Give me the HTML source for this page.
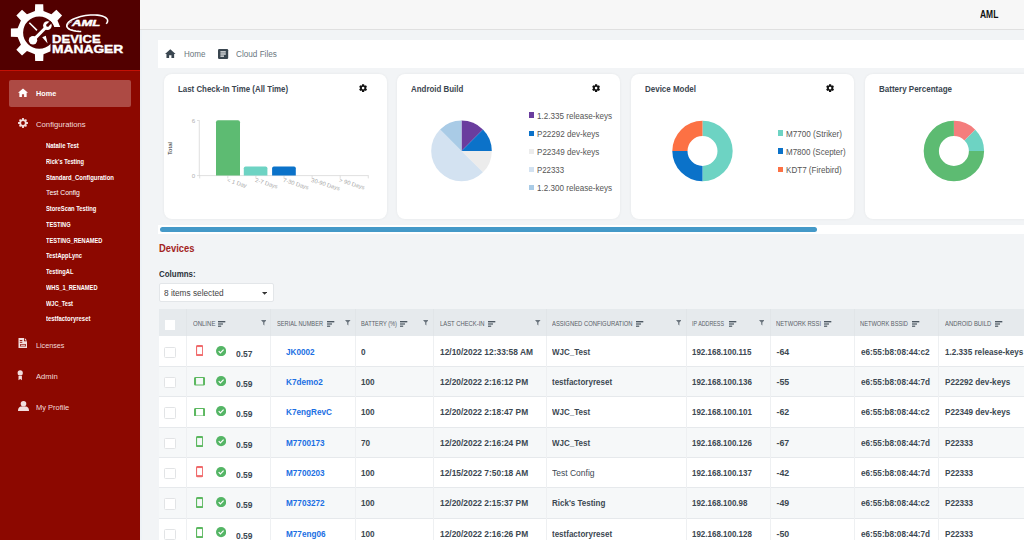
<!DOCTYPE html><html><head><meta charset="utf-8"><style>
html,body{margin:0;padding:0}
body{width:1024px;height:540px;overflow:hidden;position:relative;background:#f2f4f6;font-family:"Liberation Sans",sans-serif}
.t{position:absolute;white-space:nowrap;line-height:1;transform-origin:0 0}
.r{position:absolute}
</style></head><body>
<div class="r" style="left:0px;top:0px;width:140px;height:540px;background:#8c0800;"></div>
<div class="r" style="left:0px;top:0px;width:140px;height:69.5px;background:#520000;"></div>
<div class="r" style="left:0px;top:69.5px;width:140px;height:1.6px;background:#c41005;"></div>
<div class="r" style="left:140px;top:30px;width:1.5px;height:510px;background:#eef2f6;"></div>
<svg class="r" style="left:0px;top:0px;" width="140" height="70" viewBox="0 0 140 70"><path fill="#fff" fill-rule="evenodd" d="M34.91,11.02 L35.17,4.29 L43.23,4.29 L43.49,11.02 L51.42,14.31 L56.37,9.73 L62.07,15.43 L57.49,20.38 L60.78,28.31 L67.51,28.57 L67.51,36.63 L60.78,36.89 L57.49,44.82 L62.07,49.77 L56.37,55.47 L51.42,50.89 L43.49,54.18 L43.23,60.91 L35.17,60.91 L34.91,54.18 L26.98,50.89 L22.03,55.47 L16.33,49.77 L20.91,44.82 L17.62,36.89 L10.89,36.63 L10.89,28.57 L17.62,28.31 L20.91,20.38 L16.33,15.43 L22.03,9.73 L26.98,14.31ZM55.30,32.60 A16.1,16.1 0 1,0 23.10,32.60 A16.1,16.1 0 1,0 55.30,32.60Z"/><path fill="#520000" d="M50.5 27 L140 27 L140 69 L50.5 69Z"/><line x1="33" y1="40.3" x2="46.8" y2="26.5" stroke="#fff" stroke-width="3.1"/><circle cx="33" cy="40.3" r="4.2" fill="#fff"/><circle cx="47.4" cy="25.6" r="4.3" fill="#fff"/><path d="M48.4 26.6 L46.4 24.6 L50.2 20.8 L52.2 22.8Z" fill="#520000"/><circle cx="47.6" cy="25.4" r="1.35" fill="#520000"/><line x1="29.3" y1="22.7" x2="37" y2="30.4" stroke="#fff" stroke-width="1.5"/><path d="M42.2 37.2 L45.8 35.8 L47.6 43.4Z" fill="#fff"/><path d="M81.24,31.44 L78.95,31.39 L76.77,31.22 L74.74,30.93 L72.89,30.53 L71.25,30.03 L69.84,29.43 L68.67,28.74 L67.78,27.97 L67.16,27.13 L66.83,26.23 L66.79,25.30 L67.05,24.33 L67.60,23.34 L68.42,22.36 L69.52,21.38 L70.88,20.43 L72.46,19.52 L74.26,18.67 L76.25,17.88 L78.39,17.16 L80.66,16.53 L83.02,16.00 L85.45,15.57 L87.90,15.26 L90.34,15.05 L92.73,14.96 L95.04,15.00 L97.25,15.15 L99.30,15.41 L101.19,15.79 L102.87,16.27 L104.32,16.86 L105.53,17.53 L106.48,18.29 L107.15,19.11 L107.53,20.00 L107.62,20.93 L107.42,21.90 L106.93,22.88 L106.15,23.87" fill="none" stroke="#fff" stroke-width="1.6"/><path d="M75.99,30.58 L75.29,30.51 L74.61,30.44 L73.96,30.35 L73.33,30.25 L72.72,30.14 L72.14,30.01 L71.58,29.88 L71.06,29.73 L70.56,29.58 L70.09,29.41 L69.66,29.23 L69.25,29.04 L68.88,28.84 L68.54,28.64 L68.24,28.42 L67.97,28.20 L67.73,27.96 L67.53,27.73 L67.37,27.48 L67.24,27.22 L67.14,26.97 L67.09,26.70 L67.07,26.43 L67.09,26.15 L67.14,25.88 L67.23,25.59 L67.36,25.31 L67.52,25.02 L67.72,24.73 L67.95,24.44 L68.22,24.14 L68.52,23.85 L68.86,23.56 L69.23,23.27 L69.63,22.98 L70.07,22.69 L70.53,22.40 L71.03,22.12 L71.55,21.84 L72.11,21.57" fill="none" stroke="#fff" stroke-width="0.9"/></svg>
<div class="t" style="left:71.60px;top:19.01px;font-size:9.2px;font-weight:700;color:#fff;transform:scaleX(1.4166);font-style:italic;-webkit-text-stroke:0.45px #fff;">AML</div>
<div class="t" style="left:52.40px;top:34.57px;font-size:10.2px;font-weight:900;color:#fff;transform:scaleX(1.2811);-webkit-text-stroke:0.35px #fff;">DEVICE</div>
<div class="t" style="left:52.40px;top:44.77px;font-size:10.2px;font-weight:900;color:#fff;transform:scaleX(1.3545);-webkit-text-stroke:0.35px #fff;">MANAGER</div>
<div class="r" style="left:9.3px;top:80px;width:122px;height:26.8px;background:#ad4a44;border-radius:2px"></div>
<svg class="r" style="left:17.8px;top:87.5px;" width="10" height="9.5" viewBox="0 0 11 10"><path fill="#fff" d="M5.5 0.3 L11 5.1 L9.5 5.1 L9.5 9.6 L6.7 9.6 L6.7 6.6 L4.3 6.6 L4.3 9.6 L1.5 9.6 L1.5 5.1 L0 5.1Z"/></svg>
<div class="t" style="left:35.80px;top:89.70px;font-size:7.8px;font-weight:700;color:#fff;transform:scaleX(0.9321);">Home</div>
<svg class="r" style="left:17.8px;top:117.8px;" width="10" height="10" viewBox="0 0 10 10"><path fill="#f2dede" fill-rule="evenodd" d="M4.08,1.31 L4.10,0.08 L5.90,0.08 L5.92,1.31 L6.96,1.74 L7.84,0.89 L9.11,2.16 L8.26,3.04 L8.69,4.08 L9.92,4.10 L9.92,5.90 L8.69,5.92 L8.26,6.96 L9.11,7.84 L7.84,9.11 L6.96,8.26 L5.92,8.69 L5.90,9.92 L4.10,9.92 L4.08,8.69 L3.04,8.26 L2.16,9.11 L0.89,7.84 L1.74,6.96 L1.31,5.92 L0.08,5.90 L0.08,4.10 L1.31,4.08 L1.74,3.04 L0.89,2.16 L2.16,0.89 L3.04,1.74ZM6.90,5.00 A1.9,1.9 0 1,0 3.10,5.00 A1.9,1.9 0 1,0 6.90,5.00Z"/></svg>
<div class="t" style="left:35.80px;top:120.80px;font-size:7.8px;font-weight:400;color:#f2dcdc;transform:scaleX(0.9884);">Configurations</div>
<div class="t" style="left:45.70px;top:142.21px;font-size:7.2px;font-weight:700;color:#fff;transform:scaleX(0.8239);">Natalie Test</div>
<div class="t" style="left:45.70px;top:157.94px;font-size:7.2px;font-weight:700;color:#fff;transform:scaleX(0.7930);">Rick's Testing</div>
<div class="t" style="left:45.70px;top:173.67px;font-size:7.2px;font-weight:700;color:#fff;transform:scaleX(0.8266);">Standard_Configuration</div>
<div class="t" style="left:45.70px;top:188.89px;font-size:7.8px;font-weight:400;color:#fff;transform:scaleX(0.8689);">Test Config</div>
<div class="t" style="left:45.70px;top:205.13px;font-size:7.2px;font-weight:700;color:#fff;transform:scaleX(0.8054);">StoreScan Testing</div>
<div class="t" style="left:45.70px;top:220.86px;font-size:7.2px;font-weight:700;color:#fff;transform:scaleX(0.7896);">TESTING</div>
<div class="t" style="left:45.70px;top:236.59px;font-size:7.2px;font-weight:700;color:#fff;transform:scaleX(0.7876);">TESTING_RENAMED</div>
<div class="t" style="left:45.70px;top:252.32px;font-size:7.2px;font-weight:700;color:#fff;transform:scaleX(0.8025);">TestAppLync</div>
<div class="t" style="left:45.70px;top:268.05px;font-size:7.2px;font-weight:700;color:#fff;transform:scaleX(0.7917);">TestingAL</div>
<div class="t" style="left:45.70px;top:283.78px;font-size:7.2px;font-weight:700;color:#fff;transform:scaleX(0.7910);">WHS_1_RENAMED</div>
<div class="t" style="left:45.70px;top:299.51px;font-size:7.2px;font-weight:700;color:#fff;transform:scaleX(0.7890);">WJC_Test</div>
<div class="t" style="left:45.70px;top:315.24px;font-size:7.2px;font-weight:700;color:#fff;transform:scaleX(0.8232);">testfactoryreset</div>
<svg class="r" style="left:17.5px;top:338.3px;" width="10" height="10" viewBox="0 0 10 10"><path fill="#f2dede" d="M0.5 0 L6 0 L6 3.2 L9 3.2 L9 10 L0.5 10Z M6.8 0 L9 2.4 L6.8 2.4Z"/><rect x="2" y="6.2" width="6" height="2.2" fill="#8c0800"/><rect x="2.7" y="6.8" width="4.6" height="1" fill="#f2dede"/><rect x="1.8" y="2" width="2.5" height="0.9" fill="#8c0800"/><rect x="1.8" y="3.8" width="2.5" height="0.9" fill="#8c0800"/></svg>
<div class="t" style="left:35.80px;top:341.50px;font-size:7.8px;font-weight:400;color:#f2dcdc;transform:scaleX(0.9226);">Licenses</div>
<svg class="r" style="left:17.3px;top:369.8px;" width="7" height="11" viewBox="0 0 7 11"><circle cx="3.2" cy="2.9" r="2.6" fill="#f2dede"/><path d="M1.5 5.9 L4.9 5.9 L4.9 10.3 L3.2 9 L1.5 10.3Z" fill="#f2dede"/></svg>
<div class="t" style="left:35.80px;top:373.10px;font-size:7.8px;font-weight:400;color:#f2dcdc;transform:scaleX(0.9815);">Admin</div>
<svg class="r" style="left:17.5px;top:401.3px;" width="11" height="10" viewBox="0 0 11 10"><circle cx="5.5" cy="2.8" r="2.8" fill="#f2dede"/><path d="M0 10 C0 6.5 2 5.5 3.2 5.5 L7.8 5.5 C9 5.5 11 6.5 11 10Z" fill="#f2dede"/></svg>
<div class="t" style="left:35.80px;top:404.10px;font-size:7.8px;font-weight:400;color:#f2dcdc;transform:scaleX(0.9604);">My Profile</div>
<div class="r" style="left:140px;top:0px;width:884px;height:29px;background:#f7f7f7;"></div>
<div class="r" style="left:140px;top:29px;width:884px;height:1px;background:#e0e0e0;"></div>
<div class="t" style="left:979.80px;top:8.81px;font-size:10.5px;font-weight:700;color:#111;transform:scaleX(0.8044);">AML</div>
<div class="r" style="left:158px;top:40px;width:866px;height:27.5px;background:#ffffff;"></div>
<svg class="r" style="left:165.3px;top:48.8px;" width="10.6" height="9.6" viewBox="0 0 11 10"><path fill="#3a4650" d="M5.5 0.3 L11 5.1 L9.5 5.1 L9.5 9.6 L6.7 9.6 L6.7 6.6 L4.3 6.6 L4.3 9.6 L1.5 9.6 L1.5 5.1 L0 5.1Z"/></svg>
<div class="t" style="left:183.50px;top:50.09px;font-size:8.4px;font-weight:400;color:#6b7780;transform:scaleX(0.9622);">Home</div>
<svg class="r" style="left:218.4px;top:48.9px;" width="10.2" height="10" viewBox="0 0 10.2 10"><rect x="0" y="0" width="10.2" height="10" rx="1.2" fill="#3a4650"/><rect x="2.4" y="2.3" width="5.4" height="1.2" fill="#fff"/><rect x="2.4" y="4.4" width="5.4" height="1.2" fill="#fff"/><rect x="2.4" y="6.5" width="3.6" height="1.2" fill="#fff"/></svg>
<div class="t" style="left:235.90px;top:50.09px;font-size:8.4px;font-weight:400;color:#6b7780;transform:scaleX(0.9760);">Cloud Files</div>
<div class="r" style="left:164px;top:74px;width:222.5px;height:145px;background:#ffffff;border-radius:8px;box-shadow:0 0 3px rgba(0,0,0,0.06)"></div>
<div class="t" style="left:177.90px;top:84.27px;font-size:9.6px;font-weight:700;color:#3b4650;transform:scaleX(0.8216);">Last Check-In Time (All Time)</div>
<svg class="r" style="left:358.6px;top:83.7px;" width="8.2" height="8.2" viewBox="0 0 8.2 8.2"><path fill="#111" fill-rule="evenodd" d="M2.95,1.33 L3.04,0.14 L5.16,0.14 L5.25,1.33 L5.93,1.72 L7.00,1.20 L8.06,3.04 L7.07,3.71 L7.07,4.49 L8.06,5.16 L7.00,7.00 L5.93,6.48 L5.25,6.87 L5.16,8.06 L3.04,8.06 L2.95,6.87 L2.27,6.48 L1.20,7.00 L0.14,5.16 L1.13,4.49 L1.13,3.71 L0.14,3.04 L1.20,1.20 L2.27,1.72ZM5.40,4.10 A1.3,1.3 0 1,0 2.80,4.10 A1.3,1.3 0 1,0 5.40,4.10Z"/></svg>
<div class="r" style="left:397.2px;top:74px;width:222.5px;height:145px;background:#ffffff;border-radius:8px;box-shadow:0 0 3px rgba(0,0,0,0.06)"></div>
<div class="t" style="left:411.10px;top:84.27px;font-size:9.6px;font-weight:700;color:#3b4650;transform:scaleX(0.8246);">Android Build</div>
<svg class="r" style="left:591.8px;top:83.7px;" width="8.2" height="8.2" viewBox="0 0 8.2 8.2"><path fill="#111" fill-rule="evenodd" d="M2.95,1.33 L3.04,0.14 L5.16,0.14 L5.25,1.33 L5.93,1.72 L7.00,1.20 L8.06,3.04 L7.07,3.71 L7.07,4.49 L8.06,5.16 L7.00,7.00 L5.93,6.48 L5.25,6.87 L5.16,8.06 L3.04,8.06 L2.95,6.87 L2.27,6.48 L1.20,7.00 L0.14,5.16 L1.13,4.49 L1.13,3.71 L0.14,3.04 L1.20,1.20 L2.27,1.72ZM5.40,4.10 A1.3,1.3 0 1,0 2.80,4.10 A1.3,1.3 0 1,0 5.40,4.10Z"/></svg>
<div class="r" style="left:631.1px;top:74px;width:222.5px;height:145px;background:#ffffff;border-radius:8px;box-shadow:0 0 3px rgba(0,0,0,0.06)"></div>
<div class="t" style="left:645.00px;top:84.27px;font-size:9.6px;font-weight:700;color:#3b4650;transform:scaleX(0.8316);">Device Model</div>
<svg class="r" style="left:825.7px;top:83.7px;" width="8.2" height="8.2" viewBox="0 0 8.2 8.2"><path fill="#111" fill-rule="evenodd" d="M2.95,1.33 L3.04,0.14 L5.16,0.14 L5.25,1.33 L5.93,1.72 L7.00,1.20 L8.06,3.04 L7.07,3.71 L7.07,4.49 L8.06,5.16 L7.00,7.00 L5.93,6.48 L5.25,6.87 L5.16,8.06 L3.04,8.06 L2.95,6.87 L2.27,6.48 L1.20,7.00 L0.14,5.16 L1.13,4.49 L1.13,3.71 L0.14,3.04 L1.20,1.20 L2.27,1.72ZM5.40,4.10 A1.3,1.3 0 1,0 2.80,4.10 A1.3,1.3 0 1,0 5.40,4.10Z"/></svg>
<div class="r" style="left:864.8px;top:74px;width:222.5px;height:145px;background:#ffffff;border-radius:8px;box-shadow:0 0 3px rgba(0,0,0,0.06)"></div>
<div class="t" style="left:878.70px;top:84.27px;font-size:9.6px;font-weight:700;color:#3b4650;transform:scaleX(0.8347);">Battery Percentage</div>
<svg class="r" style="left:0px;top:0px;" width="400" height="230" viewBox="0 0 400 230"><line x1="199.3" y1="120.3" x2="199.3" y2="176" stroke="#d8d8d8" stroke-width="0.8"/><line x1="197" y1="120.5" x2="199.3" y2="120.5" stroke="#d8d8d8" stroke-width="0.8"/><line x1="197" y1="175.6" x2="368.6" y2="175.6" stroke="#d8d8d8" stroke-width="0.8"/><line x1="199.7" y1="175.6" x2="199.7" y2="178.4" stroke="#d8d8d8" stroke-width="0.8"/><line x1="227.8" y1="175.6" x2="227.8" y2="178.4" stroke="#d8d8d8" stroke-width="0.8"/><line x1="255.9" y1="175.6" x2="255.9" y2="178.4" stroke="#d8d8d8" stroke-width="0.8"/><line x1="284.0" y1="175.6" x2="284.0" y2="178.4" stroke="#d8d8d8" stroke-width="0.8"/><line x1="312.1" y1="175.6" x2="312.1" y2="178.4" stroke="#d8d8d8" stroke-width="0.8"/><line x1="340.2" y1="175.6" x2="340.2" y2="178.4" stroke="#d8d8d8" stroke-width="0.8"/><line x1="368.3" y1="175.6" x2="368.3" y2="178.4" stroke="#d8d8d8" stroke-width="0.8"/><path d="M216 175.6 L216 122.3 Q216 120.3 218 120.3 L238 120.3 Q240 120.3 240 122.3 L240 175.6Z" fill="#5dbb72"/><path d="M243.8 175.6 L243.8 168.3 Q243.8 166.5 245.6 166.5 L265.6 166.5 Q267.4 166.5 267.4 168.3 L267.4 175.6Z" fill="#6dd3c3"/><path d="M272.1 175.6 L272.1 168.3 Q272.1 166.5 273.9 166.5 L294 166.5 Q295.8 166.5 295.8 168.3 L295.8 175.6Z" fill="#0b72c9"/></svg>
<div class="t" style="left:191.80px;top:117.75px;font-size:6.2px;font-weight:400;color:#b0b0b0;">6</div>
<div class="t" style="left:191.80px;top:172.75px;font-size:6.2px;font-weight:400;color:#b0b0b0;">0</div>
<div class="t" style="left:227.8px;top:178.3px;font-size:5.8px;color:#a8a8a8;transform:rotate(17deg)">&lt; 1 Day</div>
<div class="t" style="left:255.9px;top:178.3px;font-size:5.8px;color:#a8a8a8;transform:rotate(17deg)">2-7 Days</div>
<div class="t" style="left:284.0px;top:178.3px;font-size:5.8px;color:#a8a8a8;transform:rotate(17deg)">7-30 Days</div>
<div class="t" style="left:312.1px;top:178.3px;font-size:5.8px;color:#a8a8a8;transform:rotate(17deg)">30-90 Days</div>
<div class="t" style="left:340.2px;top:178.3px;font-size:5.8px;color:#a8a8a8;transform:rotate(17deg)">&gt; 90 Days</div>
<div class="t" style="left:166.8px;top:155.2px;font-size:6.1px;color:#333;transform:rotate(-90deg)">Total</div>
<svg class="r" style="left:0px;top:0px;" width="1024" height="230" viewBox="0 0 1024 230"><path d="M461.5,150.9 L461.50,120.60 A30.3,30.3 0 0,1 482.93,129.47Z" fill="#6a3d9e"/><path d="M461.5,150.9 L482.93,129.47 A30.3,30.3 0 0,1 491.80,150.90Z" fill="#0b72c9"/><path d="M461.5,150.9 L491.80,150.90 A30.3,30.3 0 0,1 482.93,172.33Z" fill="#ececec"/><path d="M461.5,150.9 L482.93,172.33 A30.3,30.3 0 0,1 440.07,129.47Z" fill="#d3e2f1"/><path d="M461.5,150.9 L440.07,129.47 A30.3,30.3 0 0,1 461.50,120.60Z" fill="#a9cbe6"/><path d="M702.50,120.80 A30.2,30.2 0 0,1 702.50,181.20 L702.50,166.00 A15,15 0 0,0 702.50,136.00Z" fill="#6dd3c3"/><path d="M702.50,181.20 A30.2,30.2 0 0,1 672.30,151.00 L687.50,151.00 A15,15 0 0,0 702.50,166.00Z" fill="#0b72c9"/><path d="M672.30,151.00 A30.2,30.2 0 0,1 702.50,120.80 L702.50,136.00 A15,15 0 0,0 687.50,151.00Z" fill="#fc7144"/><path d="M953.90,120.80 A30.2,30.2 0 0,1 975.25,129.65 L964.51,140.39 A15,15 0 0,0 953.90,136.00Z" fill="#f47d7d"/><path d="M975.25,129.65 A30.2,30.2 0 0,1 984.10,151.00 L968.90,151.00 A15,15 0 0,0 964.51,140.39Z" fill="#6dd3c3"/><path d="M984.10,151.00 A30.2,30.2 0 1,1 953.90,120.80 L953.90,136.00 A15,15 0 1,0 968.90,151.00Z" fill="#5dbb72"/></svg>
<div class="r" style="left:528.5px;top:112.4px;width:5.6px;height:5.6px;background:#6a3d9e;"></div>
<div class="t" style="left:537.00px;top:111.82px;font-size:8.6px;font-weight:400;color:#555;transform:scaleX(0.9401);">1.2.335 release-keys</div>
<div class="r" style="left:528.5px;top:130.5px;width:5.6px;height:5.6px;background:#0b72c9;"></div>
<div class="t" style="left:537.00px;top:129.92px;font-size:8.6px;font-weight:400;color:#555;transform:scaleX(0.9382);">P22292 dev-keys</div>
<div class="r" style="left:528.5px;top:148.60000000000002px;width:5.6px;height:5.6px;background:#ececec;"></div>
<div class="t" style="left:537.00px;top:148.02px;font-size:8.6px;font-weight:400;color:#555;transform:scaleX(0.9382);">P22349 dev-keys</div>
<div class="r" style="left:528.5px;top:166.70000000000002px;width:5.6px;height:5.6px;background:#d3e2f1;"></div>
<div class="t" style="left:537.00px;top:166.12px;font-size:8.6px;font-weight:400;color:#555;transform:scaleX(0.9143);">P22333</div>
<div class="r" style="left:528.5px;top:184.8px;width:5.6px;height:5.6px;background:#a9cbe6;"></div>
<div class="t" style="left:537.00px;top:184.22px;font-size:8.6px;font-weight:400;color:#555;transform:scaleX(0.9401);">1.2.300 release-keys</div>
<div class="r" style="left:777.7px;top:130.3px;width:5.6px;height:5.6px;background:#6dd3c3;"></div>
<div class="t" style="left:785.60px;top:129.72px;font-size:8.6px;font-weight:400;color:#555;transform:scaleX(0.9456);">M7700 (Striker)</div>
<div class="r" style="left:777.7px;top:148.4px;width:5.6px;height:5.6px;background:#0b72c9;"></div>
<div class="t" style="left:785.60px;top:147.82px;font-size:8.6px;font-weight:400;color:#555;transform:scaleX(0.9310);">M7800 (Scepter)</div>
<div class="r" style="left:777.7px;top:166.5px;width:5.6px;height:5.6px;background:#fc7144;"></div>
<div class="t" style="left:785.60px;top:165.92px;font-size:8.6px;font-weight:400;color:#555;transform:scaleX(0.9389);">KDT7 (Firebird)</div>
<div class="r" style="left:158px;top:225px;width:866px;height:9.4px;background:#ffffff;"></div>
<div class="r" style="left:160.3px;top:226.8px;width:656.7px;height:5.5px;background:#4499c8;border-radius:3px"></div>
<div class="t" style="left:158.80px;top:243.57px;font-size:10.2px;font-weight:700;color:#a3231d;transform:scaleX(0.9187);">Devices</div>
<div class="t" style="left:158.60px;top:270.09px;font-size:8.4px;font-weight:700;color:#2b333a;transform:scaleX(0.9476);">Columns:</div>
<div class="r" style="left:158.6px;top:283.4px;width:115.4px;height:19.1px;background:#ffffff;border:1px solid #e3e6e9;box-sizing:border-box;border-radius:2px"></div>
<div class="t" style="left:164.40px;top:288.89px;font-size:8.4px;font-weight:400;color:#444;transform:scaleX(0.9865);">8 items selected</div>
<svg class="r" style="left:261.9px;top:291.8px;" width="5.4" height="3" viewBox="0 0 5.4 3"><path d="M0 0 L5.2 0 L2.6 2.8Z" fill="#333"/></svg>
<div class="r" style="left:158.7px;top:309.4px;width:865.3px;height:26.900000000000034px;background:#e6eaed;"></div>
<div class="r" style="left:158.7px;top:336.3px;width:865.3px;height:30.33px;background:#ffffff;"></div>
<div class="r" style="left:158.7px;top:366.63px;width:865.3px;height:30.33px;background:#f6f8f9;"></div>
<div class="r" style="left:158.7px;top:396.96px;width:865.3px;height:30.33px;background:#ffffff;"></div>
<div class="r" style="left:158.7px;top:427.29px;width:865.3px;height:30.33px;background:#f6f8f9;"></div>
<div class="r" style="left:158.7px;top:457.62px;width:865.3px;height:30.33px;background:#ffffff;"></div>
<div class="r" style="left:158.7px;top:487.95px;width:865.3px;height:30.33px;background:#f6f8f9;"></div>
<div class="r" style="left:158.7px;top:518.28px;width:865.3px;height:30.33px;background:#ffffff;"></div>
<div class="r" style="left:158.7px;top:366.13px;width:865.3px;height:1px;background:#e6e9ec;"></div>
<div class="r" style="left:158.7px;top:396.46px;width:865.3px;height:1px;background:#e6e9ec;"></div>
<div class="r" style="left:158.7px;top:426.79px;width:865.3px;height:1px;background:#e6e9ec;"></div>
<div class="r" style="left:158.7px;top:457.12px;width:865.3px;height:1px;background:#e6e9ec;"></div>
<div class="r" style="left:158.7px;top:487.45px;width:865.3px;height:1px;background:#e6e9ec;"></div>
<div class="r" style="left:158.7px;top:517.78px;width:865.3px;height:1px;background:#e6e9ec;"></div>
<div class="r" style="left:158.7px;top:548.11px;width:865.3px;height:1px;background:#e6e9ec;"></div>
<div class="r" style="left:186.3px;top:309.4px;width:1px;height:26.900000000000034px;background:#e1e5e8;"></div>
<div class="r" style="left:186.3px;top:336.3px;width:1px;height:203.7px;background:#eef0f2;"></div>
<div class="r" style="left:269.9px;top:309.4px;width:1px;height:26.900000000000034px;background:#e1e5e8;"></div>
<div class="r" style="left:269.9px;top:336.3px;width:1px;height:203.7px;background:#eef0f2;"></div>
<div class="r" style="left:355.2px;top:309.4px;width:1px;height:26.900000000000034px;background:#e1e5e8;"></div>
<div class="r" style="left:355.2px;top:336.3px;width:1px;height:203.7px;background:#eef0f2;"></div>
<div class="r" style="left:432.8px;top:309.4px;width:1px;height:26.900000000000034px;background:#e1e5e8;"></div>
<div class="r" style="left:432.8px;top:336.3px;width:1px;height:203.7px;background:#eef0f2;"></div>
<div class="r" style="left:545.9px;top:309.4px;width:1px;height:26.900000000000034px;background:#e1e5e8;"></div>
<div class="r" style="left:545.9px;top:336.3px;width:1px;height:203.7px;background:#eef0f2;"></div>
<div class="r" style="left:686.2px;top:309.4px;width:1px;height:26.900000000000034px;background:#e1e5e8;"></div>
<div class="r" style="left:686.2px;top:336.3px;width:1px;height:203.7px;background:#eef0f2;"></div>
<div class="r" style="left:769.8px;top:309.4px;width:1px;height:26.900000000000034px;background:#e1e5e8;"></div>
<div class="r" style="left:769.8px;top:336.3px;width:1px;height:203.7px;background:#eef0f2;"></div>
<div class="r" style="left:853.7px;top:309.4px;width:1px;height:26.900000000000034px;background:#e1e5e8;"></div>
<div class="r" style="left:853.7px;top:336.3px;width:1px;height:203.7px;background:#eef0f2;"></div>
<div class="r" style="left:938.4px;top:309.4px;width:1px;height:26.900000000000034px;background:#e1e5e8;"></div>
<div class="r" style="left:938.4px;top:336.3px;width:1px;height:203.7px;background:#eef0f2;"></div>
<div class="r" style="left:164.8px;top:320px;width:10.6px;height:10.2px;background:#ffffff;"></div>
<div class="t" style="left:192.50px;top:320.56px;font-size:6.9px;font-weight:400;color:#596168;transform:scaleX(0.8731);">ONLINE</div>
<svg class="r" style="left:218.1px;top:320.5px;" width="8" height="6" viewBox="0 0 8 6"><rect x="0" y="0" width="7.3" height="1.4" fill="#4d5862"/><rect x="0" y="2.4" width="5" height="1.2" fill="#4d5862"/><rect x="0" y="4.6" width="3.2" height="1.2" fill="#4d5862"/></svg>
<svg class="r" style="left:260.8px;top:320.2px;" width="5.6" height="5.4" viewBox="0 0 5.6 5.4"><path d="M0 0 L5.6 0 L3.4 2.6 L3.4 5.4 L2.2 4.6 L2.2 2.6Z" fill="#6b757e"/></svg>
<div class="t" style="left:277.00px;top:320.56px;font-size:6.9px;font-weight:400;color:#596168;transform:scaleX(0.8210);">SERIAL NUMBER</div>
<svg class="r" style="left:326.5px;top:320.5px;" width="8" height="6" viewBox="0 0 8 6"><rect x="0" y="0" width="7.3" height="1.4" fill="#4d5862"/><rect x="0" y="2.4" width="5" height="1.2" fill="#4d5862"/><rect x="0" y="4.6" width="3.2" height="1.2" fill="#4d5862"/></svg>
<svg class="r" style="left:345px;top:320.2px;" width="5.6" height="5.4" viewBox="0 0 5.6 5.4"><path d="M0 0 L5.6 0 L3.4 2.6 L3.4 5.4 L2.2 4.6 L2.2 2.6Z" fill="#6b757e"/></svg>
<div class="t" style="left:360.80px;top:320.56px;font-size:6.9px;font-weight:400;color:#596168;transform:scaleX(0.8246);">BATTERY (%)</div>
<svg class="r" style="left:400px;top:320.5px;" width="8" height="6" viewBox="0 0 8 6"><rect x="0" y="0" width="7.3" height="1.4" fill="#4d5862"/><rect x="0" y="2.4" width="5" height="1.2" fill="#4d5862"/><rect x="0" y="4.6" width="3.2" height="1.2" fill="#4d5862"/></svg>
<svg class="r" style="left:422.8px;top:320.2px;" width="5.6" height="5.4" viewBox="0 0 5.6 5.4"><path d="M0 0 L5.6 0 L3.4 2.6 L3.4 5.4 L2.2 4.6 L2.2 2.6Z" fill="#6b757e"/></svg>
<div class="t" style="left:439.60px;top:320.56px;font-size:6.9px;font-weight:400;color:#596168;transform:scaleX(0.8501);">LAST CHECK-IN</div>
<svg class="r" style="left:488px;top:320.5px;" width="8" height="6" viewBox="0 0 8 6"><rect x="0" y="0" width="7.3" height="1.4" fill="#4d5862"/><rect x="0" y="2.4" width="5" height="1.2" fill="#4d5862"/><rect x="0" y="4.6" width="3.2" height="1.2" fill="#4d5862"/></svg>
<svg class="r" style="left:535.4px;top:320.2px;" width="5.6" height="5.4" viewBox="0 0 5.6 5.4"><path d="M0 0 L5.6 0 L3.4 2.6 L3.4 5.4 L2.2 4.6 L2.2 2.6Z" fill="#6b757e"/></svg>
<div class="t" style="left:552.20px;top:320.56px;font-size:6.9px;font-weight:400;color:#596168;transform:scaleX(0.8500);">ASSIGNED CONFIGURATION</div>
<svg class="r" style="left:635.7px;top:320.5px;" width="8" height="6" viewBox="0 0 8 6"><rect x="0" y="0" width="7.3" height="1.4" fill="#4d5862"/><rect x="0" y="2.4" width="5" height="1.2" fill="#4d5862"/><rect x="0" y="4.6" width="3.2" height="1.2" fill="#4d5862"/></svg>
<svg class="r" style="left:675.5px;top:320.2px;" width="5.6" height="5.4" viewBox="0 0 5.6 5.4"><path d="M0 0 L5.6 0 L3.4 2.6 L3.4 5.4 L2.2 4.6 L2.2 2.6Z" fill="#6b757e"/></svg>
<div class="t" style="left:692.20px;top:320.56px;font-size:6.9px;font-weight:400;color:#596168;transform:scaleX(0.7761);">IP ADDRESS</div>
<svg class="r" style="left:729px;top:320.5px;" width="8" height="6" viewBox="0 0 8 6"><rect x="0" y="0" width="7.3" height="1.4" fill="#4d5862"/><rect x="0" y="2.4" width="5" height="1.2" fill="#4d5862"/><rect x="0" y="4.6" width="3.2" height="1.2" fill="#4d5862"/></svg>
<svg class="r" style="left:758.8px;top:320.2px;" width="5.6" height="5.4" viewBox="0 0 5.6 5.4"><path d="M0 0 L5.6 0 L3.4 2.6 L3.4 5.4 L2.2 4.6 L2.2 2.6Z" fill="#6b757e"/></svg>
<div class="t" style="left:776.30px;top:320.56px;font-size:6.9px;font-weight:400;color:#596168;transform:scaleX(0.8456);">NETWORK RSSI</div>
<svg class="r" style="left:823.5px;top:320.5px;" width="8" height="6" viewBox="0 0 8 6"><rect x="0" y="0" width="7.3" height="1.4" fill="#4d5862"/><rect x="0" y="2.4" width="5" height="1.2" fill="#4d5862"/><rect x="0" y="4.6" width="3.2" height="1.2" fill="#4d5862"/></svg>
<div class="t" style="left:860.40px;top:320.56px;font-size:6.9px;font-weight:400;color:#596168;transform:scaleX(0.8303);">NETWORK BSSID</div>
<svg class="r" style="left:912px;top:320.5px;" width="8" height="6" viewBox="0 0 8 6"><rect x="0" y="0" width="7.3" height="1.4" fill="#4d5862"/><rect x="0" y="2.4" width="5" height="1.2" fill="#4d5862"/><rect x="0" y="4.6" width="3.2" height="1.2" fill="#4d5862"/></svg>
<div class="t" style="left:945.00px;top:320.56px;font-size:6.9px;font-weight:400;color:#596168;transform:scaleX(0.8574);">ANDROID BUILD</div>
<svg class="r" style="left:994.6px;top:320.5px;" width="8" height="6" viewBox="0 0 8 6"><rect x="0" y="0" width="7.3" height="1.4" fill="#4d5862"/><rect x="0" y="2.4" width="5" height="1.2" fill="#4d5862"/><rect x="0" y="4.6" width="3.2" height="1.2" fill="#4d5862"/></svg>
<div class="r" style="left:164.4px;top:346.7px;width:11.5px;height:11.4px;background:#ffffff;border:1px solid #e2e4e6;box-sizing:border-box;border-radius:1.5px"></div>
<svg class="r" style="left:196.0px;top:345.1px;" width="7.2" height="11.2" viewBox="0 0 7.2 11.2"><rect x="0.55" y="0.55" width="6.1" height="10.1" rx="1" fill="none" stroke="#f06b6c" stroke-width="1.1"/><rect x="0.55" y="0.55" width="6.1" height="1.5" fill="#f06b6c"/><rect x="0.55" y="9.1" width="6.1" height="1.5" fill="#f06b6c"/></svg>
<svg class="r" style="left:216.1px;top:345.5px;" width="10.2" height="10.2" viewBox="0 0 10.2 10.2"><circle cx="5.1" cy="5.1" r="5.1" fill="#54b565"/><path d="M2.7 5.2 L4.4 6.9 L7.6 3.7" fill="none" stroke="#fff" stroke-width="1.2"/></svg>
<div class="t" style="left:236.00px;top:349.65px;font-size:8.8px;font-weight:700;color:#3c4852;transform:scaleX(0.9635);">0.57</div>
<div class="t" style="left:286.10px;top:347.65px;font-size:8.8px;font-weight:700;color:#1b6fe3;transform:scaleX(0.9300);">JK0002</div>
<div class="t" style="left:361.10px;top:347.65px;font-size:8.8px;font-weight:700;color:#3c4852;transform:scaleX(0.9300);">0</div>
<div class="t" style="left:439.90px;top:347.65px;font-size:8.8px;font-weight:700;color:#3c4852;transform:scaleX(0.9540);">12/10/2022 12:33:58 AM</div>
<div class="t" style="left:552.40px;top:347.65px;font-size:8.8px;font-weight:700;color:#3c4852;transform:scaleX(0.9100);">WJC_Test</div>
<div class="t" style="left:692.20px;top:347.65px;font-size:8.8px;font-weight:700;color:#3c4852;transform:scaleX(0.9070);">192.168.100.115</div>
<div class="t" style="left:776.50px;top:347.65px;font-size:8.8px;font-weight:700;color:#3c4852;">-64</div>
<div class="t" style="left:860.60px;top:347.65px;font-size:8.8px;font-weight:700;color:#3c4852;transform:scaleX(0.9280);">e6:55:b8:08:44:c2</div>
<div class="t" style="left:945.00px;top:347.65px;font-size:8.8px;font-weight:700;color:#3c4852;transform:scaleX(0.9260);">1.2.335 release-keys</div>
<div class="r" style="left:164.4px;top:377.03px;width:11.5px;height:11.4px;background:#ffffff;border:1px solid #e2e4e6;box-sizing:border-box;border-radius:1.5px"></div>
<svg class="r" style="left:194.0px;top:377.23px;" width="11.1" height="8.5" viewBox="0 0 11.1 8.5"><rect x="0.55" y="0.55" width="10" height="7.4" rx="1" fill="none" stroke="#5cb860" stroke-width="1.1"/><rect x="0.55" y="0.55" width="1.5" height="7.4" fill="#5cb860"/><rect x="9.05" y="0.55" width="1.5" height="7.4" fill="#5cb860"/></svg>
<svg class="r" style="left:216.1px;top:375.83px;" width="10.2" height="10.2" viewBox="0 0 10.2 10.2"><circle cx="5.1" cy="5.1" r="5.1" fill="#54b565"/><path d="M2.7 5.2 L4.4 6.9 L7.6 3.7" fill="none" stroke="#fff" stroke-width="1.2"/></svg>
<div class="t" style="left:236.00px;top:379.98px;font-size:8.8px;font-weight:700;color:#3c4852;transform:scaleX(0.9635);">0.59</div>
<div class="t" style="left:286.10px;top:377.98px;font-size:8.8px;font-weight:700;color:#1b6fe3;transform:scaleX(0.9300);">K7demo2</div>
<div class="t" style="left:361.10px;top:377.98px;font-size:8.8px;font-weight:700;color:#3c4852;transform:scaleX(0.9300);">100</div>
<div class="t" style="left:439.90px;top:377.98px;font-size:8.8px;font-weight:700;color:#3c4852;transform:scaleX(0.9540);">12/20/2022 2:16:12 PM</div>
<div class="t" style="left:552.40px;top:377.98px;font-size:8.8px;font-weight:700;color:#3c4852;transform:scaleX(0.9100);">testfactoryreset</div>
<div class="t" style="left:692.20px;top:377.98px;font-size:8.8px;font-weight:700;color:#3c4852;transform:scaleX(0.9070);">192.168.100.136</div>
<div class="t" style="left:776.50px;top:377.98px;font-size:8.8px;font-weight:700;color:#3c4852;">-55</div>
<div class="t" style="left:860.60px;top:377.98px;font-size:8.8px;font-weight:700;color:#3c4852;transform:scaleX(0.9280);">e6:55:b8:08:44:7d</div>
<div class="t" style="left:945.00px;top:377.98px;font-size:8.8px;font-weight:700;color:#3c4852;transform:scaleX(0.9260);">P22292 dev-keys</div>
<div class="r" style="left:164.4px;top:407.36px;width:11.5px;height:11.4px;background:#ffffff;border:1px solid #e2e4e6;box-sizing:border-box;border-radius:1.5px"></div>
<svg class="r" style="left:194.0px;top:407.56px;" width="11.1" height="8.5" viewBox="0 0 11.1 8.5"><rect x="0.55" y="0.55" width="10" height="7.4" rx="1" fill="none" stroke="#5cb860" stroke-width="1.1"/><rect x="0.55" y="0.55" width="1.5" height="7.4" fill="#5cb860"/><rect x="9.05" y="0.55" width="1.5" height="7.4" fill="#5cb860"/></svg>
<svg class="r" style="left:216.1px;top:406.16px;" width="10.2" height="10.2" viewBox="0 0 10.2 10.2"><circle cx="5.1" cy="5.1" r="5.1" fill="#54b565"/><path d="M2.7 5.2 L4.4 6.9 L7.6 3.7" fill="none" stroke="#fff" stroke-width="1.2"/></svg>
<div class="t" style="left:236.00px;top:410.31px;font-size:8.8px;font-weight:700;color:#3c4852;transform:scaleX(0.9635);">0.59</div>
<div class="t" style="left:286.10px;top:408.31px;font-size:8.8px;font-weight:700;color:#1b6fe3;transform:scaleX(0.9300);">K7engRevC</div>
<div class="t" style="left:361.10px;top:408.31px;font-size:8.8px;font-weight:700;color:#3c4852;transform:scaleX(0.9300);">100</div>
<div class="t" style="left:439.90px;top:408.31px;font-size:8.8px;font-weight:700;color:#3c4852;transform:scaleX(0.9540);">12/20/2022 2:18:47 PM</div>
<div class="t" style="left:552.40px;top:408.31px;font-size:8.8px;font-weight:700;color:#3c4852;transform:scaleX(0.9100);">WJC_Test</div>
<div class="t" style="left:692.20px;top:408.31px;font-size:8.8px;font-weight:700;color:#3c4852;transform:scaleX(0.9070);">192.168.100.101</div>
<div class="t" style="left:776.50px;top:408.31px;font-size:8.8px;font-weight:700;color:#3c4852;">-62</div>
<div class="t" style="left:860.60px;top:408.31px;font-size:8.8px;font-weight:700;color:#3c4852;transform:scaleX(0.9280);">e6:55:b8:08:44:c2</div>
<div class="t" style="left:945.00px;top:408.31px;font-size:8.8px;font-weight:700;color:#3c4852;transform:scaleX(0.9260);">P22349 dev-keys</div>
<div class="r" style="left:164.4px;top:437.69px;width:11.5px;height:11.4px;background:#ffffff;border:1px solid #e2e4e6;box-sizing:border-box;border-radius:1.5px"></div>
<svg class="r" style="left:196.0px;top:436.09px;" width="7.2" height="11.2" viewBox="0 0 7.2 11.2"><rect x="0.55" y="0.55" width="6.1" height="10.1" rx="1" fill="none" stroke="#5cb860" stroke-width="1.1"/><rect x="0.55" y="0.55" width="6.1" height="1.5" fill="#5cb860"/><rect x="0.55" y="9.1" width="6.1" height="1.5" fill="#5cb860"/></svg>
<svg class="r" style="left:216.1px;top:436.49px;" width="10.2" height="10.2" viewBox="0 0 10.2 10.2"><circle cx="5.1" cy="5.1" r="5.1" fill="#54b565"/><path d="M2.7 5.2 L4.4 6.9 L7.6 3.7" fill="none" stroke="#fff" stroke-width="1.2"/></svg>
<div class="t" style="left:236.00px;top:440.64px;font-size:8.8px;font-weight:700;color:#3c4852;transform:scaleX(0.9635);">0.59</div>
<div class="t" style="left:286.10px;top:438.64px;font-size:8.8px;font-weight:700;color:#1b6fe3;transform:scaleX(0.9300);">M7700173</div>
<div class="t" style="left:361.10px;top:438.64px;font-size:8.8px;font-weight:700;color:#3c4852;transform:scaleX(0.9300);">70</div>
<div class="t" style="left:439.90px;top:438.64px;font-size:8.8px;font-weight:700;color:#3c4852;transform:scaleX(0.9540);">12/20/2022 2:16:24 PM</div>
<div class="t" style="left:552.40px;top:438.64px;font-size:8.8px;font-weight:700;color:#3c4852;transform:scaleX(0.9100);">WJC_Test</div>
<div class="t" style="left:692.20px;top:438.64px;font-size:8.8px;font-weight:700;color:#3c4852;transform:scaleX(0.9070);">192.168.100.126</div>
<div class="t" style="left:776.50px;top:438.64px;font-size:8.8px;font-weight:700;color:#3c4852;">-67</div>
<div class="t" style="left:860.60px;top:438.64px;font-size:8.8px;font-weight:700;color:#3c4852;transform:scaleX(0.9280);">e6:55:b8:08:44:7d</div>
<div class="t" style="left:945.00px;top:438.64px;font-size:8.8px;font-weight:700;color:#3c4852;transform:scaleX(0.9260);">P22333</div>
<div class="r" style="left:164.4px;top:468.02px;width:11.5px;height:11.4px;background:#ffffff;border:1px solid #e2e4e6;box-sizing:border-box;border-radius:1.5px"></div>
<svg class="r" style="left:196.0px;top:466.42px;" width="7.2" height="11.2" viewBox="0 0 7.2 11.2"><rect x="0.55" y="0.55" width="6.1" height="10.1" rx="1" fill="none" stroke="#f06b6c" stroke-width="1.1"/><rect x="0.55" y="0.55" width="6.1" height="1.5" fill="#f06b6c"/><rect x="0.55" y="9.1" width="6.1" height="1.5" fill="#f06b6c"/></svg>
<svg class="r" style="left:216.1px;top:466.82px;" width="10.2" height="10.2" viewBox="0 0 10.2 10.2"><circle cx="5.1" cy="5.1" r="5.1" fill="#54b565"/><path d="M2.7 5.2 L4.4 6.9 L7.6 3.7" fill="none" stroke="#fff" stroke-width="1.2"/></svg>
<div class="t" style="left:236.00px;top:470.97px;font-size:8.8px;font-weight:700;color:#3c4852;transform:scaleX(0.9635);">0.59</div>
<div class="t" style="left:286.10px;top:468.97px;font-size:8.8px;font-weight:700;color:#1b6fe3;transform:scaleX(0.9300);">M7700203</div>
<div class="t" style="left:361.10px;top:468.97px;font-size:8.8px;font-weight:700;color:#3c4852;transform:scaleX(0.9300);">100</div>
<div class="t" style="left:439.90px;top:468.97px;font-size:8.8px;font-weight:700;color:#3c4852;transform:scaleX(0.9540);">12/15/2022 7:50:18 AM</div>
<div class="t" style="left:552.40px;top:468.97px;font-size:8.8px;font-weight:400;color:#3c4852;transform:scaleX(0.9660);">Test Config</div>
<div class="t" style="left:692.20px;top:468.97px;font-size:8.8px;font-weight:700;color:#3c4852;transform:scaleX(0.9070);">192.168.100.137</div>
<div class="t" style="left:776.50px;top:468.97px;font-size:8.8px;font-weight:700;color:#3c4852;">-42</div>
<div class="t" style="left:860.60px;top:468.97px;font-size:8.8px;font-weight:700;color:#3c4852;transform:scaleX(0.9280);">e6:55:b8:08:44:7d</div>
<div class="t" style="left:945.00px;top:468.97px;font-size:8.8px;font-weight:700;color:#3c4852;transform:scaleX(0.9260);">P22333</div>
<div class="r" style="left:164.4px;top:498.35px;width:11.5px;height:11.4px;background:#ffffff;border:1px solid #e2e4e6;box-sizing:border-box;border-radius:1.5px"></div>
<svg class="r" style="left:196.0px;top:496.75px;" width="7.2" height="11.2" viewBox="0 0 7.2 11.2"><rect x="0.55" y="0.55" width="6.1" height="10.1" rx="1" fill="none" stroke="#5cb860" stroke-width="1.1"/><rect x="0.55" y="0.55" width="6.1" height="1.5" fill="#5cb860"/><rect x="0.55" y="9.1" width="6.1" height="1.5" fill="#5cb860"/></svg>
<svg class="r" style="left:216.1px;top:497.15px;" width="10.2" height="10.2" viewBox="0 0 10.2 10.2"><circle cx="5.1" cy="5.1" r="5.1" fill="#54b565"/><path d="M2.7 5.2 L4.4 6.9 L7.6 3.7" fill="none" stroke="#fff" stroke-width="1.2"/></svg>
<div class="t" style="left:236.00px;top:501.30px;font-size:8.8px;font-weight:700;color:#3c4852;transform:scaleX(0.9635);">0.59</div>
<div class="t" style="left:286.10px;top:499.30px;font-size:8.8px;font-weight:700;color:#1b6fe3;transform:scaleX(0.9300);">M7703272</div>
<div class="t" style="left:361.10px;top:499.30px;font-size:8.8px;font-weight:700;color:#3c4852;transform:scaleX(0.9300);">100</div>
<div class="t" style="left:439.90px;top:499.30px;font-size:8.8px;font-weight:700;color:#3c4852;transform:scaleX(0.9540);">12/20/2022 2:15:37 PM</div>
<div class="t" style="left:552.40px;top:499.30px;font-size:8.8px;font-weight:700;color:#3c4852;transform:scaleX(0.9100);">Rick's Testing</div>
<div class="t" style="left:692.20px;top:499.30px;font-size:8.8px;font-weight:700;color:#3c4852;transform:scaleX(0.9070);">192.168.100.98</div>
<div class="t" style="left:776.50px;top:499.30px;font-size:8.8px;font-weight:700;color:#3c4852;">-49</div>
<div class="t" style="left:860.60px;top:499.30px;font-size:8.8px;font-weight:700;color:#3c4852;transform:scaleX(0.9280);">e6:55:b8:08:44:c2</div>
<div class="t" style="left:945.00px;top:499.30px;font-size:8.8px;font-weight:700;color:#3c4852;transform:scaleX(0.9260);">P22333</div>
<div class="r" style="left:164.4px;top:528.68px;width:11.5px;height:11.4px;background:#ffffff;border:1px solid #e2e4e6;box-sizing:border-box;border-radius:1.5px"></div>
<svg class="r" style="left:196.0px;top:527.08px;" width="7.2" height="11.2" viewBox="0 0 7.2 11.2"><rect x="0.55" y="0.55" width="6.1" height="10.1" rx="1" fill="none" stroke="#5cb860" stroke-width="1.1"/><rect x="0.55" y="0.55" width="6.1" height="1.5" fill="#5cb860"/><rect x="0.55" y="9.1" width="6.1" height="1.5" fill="#5cb860"/></svg>
<svg class="r" style="left:216.1px;top:527.48px;" width="10.2" height="10.2" viewBox="0 0 10.2 10.2"><circle cx="5.1" cy="5.1" r="5.1" fill="#54b565"/><path d="M2.7 5.2 L4.4 6.9 L7.6 3.7" fill="none" stroke="#fff" stroke-width="1.2"/></svg>
<div class="t" style="left:236.00px;top:531.63px;font-size:8.8px;font-weight:700;color:#3c4852;transform:scaleX(0.9635);">0.59</div>
<div class="t" style="left:286.10px;top:529.63px;font-size:8.8px;font-weight:700;color:#1b6fe3;transform:scaleX(0.9300);">M77eng06</div>
<div class="t" style="left:361.10px;top:529.63px;font-size:8.8px;font-weight:700;color:#3c4852;transform:scaleX(0.9300);">100</div>
<div class="t" style="left:439.90px;top:529.63px;font-size:8.8px;font-weight:700;color:#3c4852;transform:scaleX(0.9540);">12/20/2022 2:16:26 PM</div>
<div class="t" style="left:552.40px;top:529.63px;font-size:8.8px;font-weight:700;color:#3c4852;transform:scaleX(0.9100);">testfactoryreset</div>
<div class="t" style="left:692.20px;top:529.63px;font-size:8.8px;font-weight:700;color:#3c4852;transform:scaleX(0.9070);">192.168.100.128</div>
<div class="t" style="left:776.50px;top:529.63px;font-size:8.8px;font-weight:700;color:#3c4852;">-50</div>
<div class="t" style="left:860.60px;top:529.63px;font-size:8.8px;font-weight:700;color:#3c4852;transform:scaleX(0.9280);">e6:55:b8:08:44:7d</div>
<div class="t" style="left:945.00px;top:529.63px;font-size:8.8px;font-weight:700;color:#3c4852;transform:scaleX(0.9260);">P22333</div>
</body></html>
